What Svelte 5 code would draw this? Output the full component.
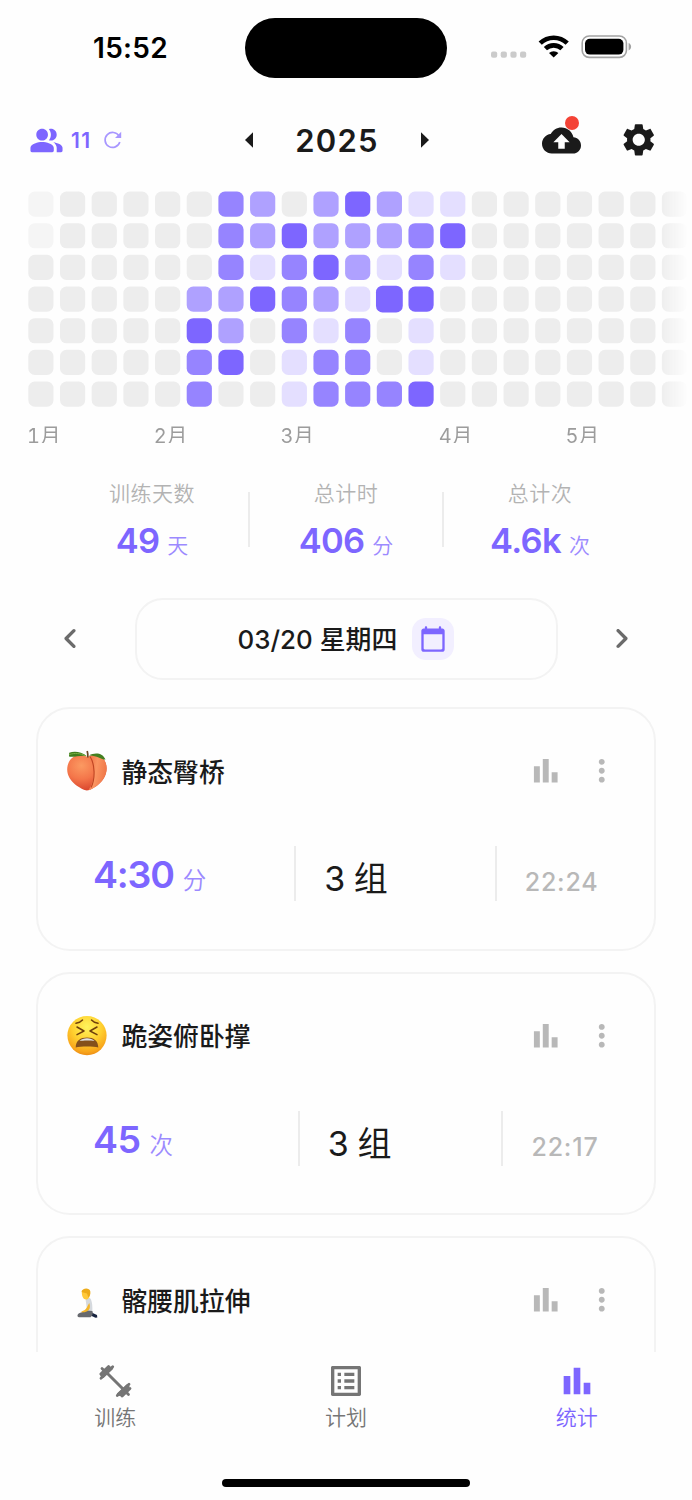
<script>
  // One string per week column, Monday to Sunday: 0 = empty, 1-4 = intensity, x = outside the year
  const weeks = [
    'xx00000', '0000000', '0000000', '0000000', '0000000', '0002433',
    '3332240', '2214000', '0433311', '2242133', '4221333', '2214003',
    '1334114', '1410000', '0000000', '0000000', '0000000', '0000000',
    '0000000', '0000000', '0000000'
  ];
  const selected = { week: 11, day: 3 };
  const months = [
    { name: '1月', column: 1 },
    { name: '2月', column: 5 },
    { name: '3月', column: 9 },
    { name: '4月', column: 14 },
    { name: '5月', column: 18 }
  ];
  const totals = [
    { label: '训练天数', value: '49', unit: '天' },
    { label: '总计时', value: '406', unit: '分' },
    { label: '总计次', value: '4.6k', unit: '次' }
  ];
  const records = [
    { icon: 'peach', name: '静态臀桥', value: '4:30', unit: '分', sets: '3 组', time: '22:24' },
    { icon: 'tired', name: '跪姿俯卧撑', value: '45', unit: '次', sets: '3 组', time: '22:17' },
    { icon: 'kneel', name: '髂腰肌拉伸' }
  ];
</script>

<div class="app">
  <div class="status">
    <span class="clock">15:52</span>
    <div class="island"></div>
    <svg class="signals" width="146" height="30" viewBox="488 32 146 30">
      <g fill="#cbcbcb">
        <rect x="491" y="51.5" width="6.2" height="6.2" rx="2" />
        <rect x="500.7" y="51.5" width="6.2" height="6.2" rx="2" />
        <rect x="510.4" y="51.5" width="6.2" height="6.2" rx="2" />
        <rect x="520" y="51.5" width="6.2" height="6.2" rx="2" />
      </g>
      <g fill="none" stroke="#000" stroke-width="4.6">
        <path d="M540.2 43.2a19.4 19.4 0 0 1 27 0" />
        <path d="M545.4 48.7a12 12 0 0 1 16.6 0" />
      </g>
      <path d="M553.7 57.6l-4.7-4.5a6.8 6.8 0 0 1 9.4 0z" />
      <rect x="582.2" y="36" width="44.2" height="21.4" rx="7" fill="none" stroke="#a3a3a3" stroke-width="1.6" />
      <rect x="585" y="38.8" width="38.4" height="15.8" rx="4.8" />
      <path d="M628.6 43v7.4c1.5-.6 2.5-2 2.5-3.7s-1-3.1-2.5-3.7z" fill="#a3a3a3" />
    </svg>
  </div>

  <header>
    <div class="online">
      <svg width="35" height="35" viewBox="0 0 24 24" fill="#7d66ff">
        <path d="M16.67 13.13C18.04 14.06 19 15.32 19 17v3h3c.55 0 1-.45 1-1v-2c0-2.18-3.57-3.47-6.33-3.87zM15 12c2.21 0 4-1.79 4-4s-1.79-4-4-4c-.47 0-.91.1-1.33.24C14.5 5.27 15 6.58 15 8s-.5 2.73-1.33 3.76c.42.14.86.24 1.33.24zM9 12c2.21 0 4-1.79 4-4s-1.79-4-4-4-4 1.79-4 4 1.79 4 4 4zM9 13c-2.67 0-8 1.34-8 4v2c0 .55.45 1 1 1h14c.55 0 1-.45 1-1v-2c0-2.66-5.33-4-8-4z" />
      </svg>
      <span>11</span>
      <svg width="20" height="20" viewBox="0 0 20 20">
        <path d="M16.1 6.2A7.5 7.5 0 1 0 16.8 12" fill="none" stroke="#a897ff" stroke-width="1.7" />
        <path d="M18.200 1.700v6.200h-6.200z" fill="#a897ff" />
      </svg>
    </div>
    <div class="year">
      <svg width="8" height="16" viewBox="0 0 8 16" fill="#1a1a1a"><path d="M8 .2v15.6L0 8z" /></svg>
      <strong>2025</strong>
      <svg width="8" height="16" viewBox="0 0 8 16" fill="#1a1a1a"><path d="M0 .2v15.6L8 8z" /></svg>
    </div>
    <div class="actions">
      <div class="cloud">
        <svg width="39" height="39" viewBox="0 0 24 24" fill="#1a1a1a"><path d="M19.35 10.04C18.67 6.59 15.64 4 12 4 9.11 4 6.6 5.64 5.35 8.04 2.34 8.36 0 10.91 0 14c0 3.31 2.69 6 6 6h13c2.76 0 5-2.24 5-5 0-2.64-2.05-4.78-4.65-4.96zM14 13v4h-4v-4H7l5-5 5 5h-3z" /></svg>
        <i class="dot"></i>
      </div>
      <svg width="37.5" height="37.5" viewBox="0 0 24 24" fill="#1a1a1a"><path d="M19.43 12.98c.04-.32.07-.64.07-.98s-.03-.66-.07-.98l2.11-1.65c.19-.15.24-.42.12-.64l-2-3.46c-.12-.22-.39-.3-.61-.22l-2.49 1c-.52-.4-1.08-.73-1.69-.98l-.38-2.65C14.46 2.18 14.25 2 14 2h-4c-.25 0-.46.18-.49.42l-.38 2.65c-.61.25-1.17.59-1.69.98l-2.49-1c-.23-.09-.49 0-.61.22l-2 3.46c-.13.22-.07.49.12.64l2.11 1.65c-.04.32-.07.65-.07.98s.03.66.07.98l-2.11 1.65c-.19.15-.24.42-.12.64l2 3.46c.12.22.39.3.61.22l2.49-1c.52.4 1.08.73 1.69.98l.38 2.65c.03.24.24.42.49.42h4c.25 0 .46-.18.49-.42l.38-2.65c.61-.25 1.17-.59 1.69-.98l2.49 1c.23.09.49 0 .61-.22l2-3.46c.12-.22.07-.49-.12-.64l-2.11-1.65zM12 15.9c-2.15 0-3.9-1.75-3.9-3.9s1.75-3.9 3.9-3.9 3.9 1.75 3.9 3.9-1.75 3.9-3.9 3.9z" /></svg>
    </div>
  </header>

  <section class="heatmap">
    <svg width="692" height="219" viewBox="0 188 692 219">
      {#each weeks as week, w}
        {#each week as level, d}
          {@const on = w === selected.week && d === selected.day}
          <rect
            class="l{level}"
            x={28.3 + w * 31.68 - (on ? 0.8 : 0)}
            y={191.5 + d * 31.66 - (on ? 0.8 : 0)}
            width={on ? 26.8 : 25.2}
            height={on ? 26.8 : 25.2}
            rx="6.6"
          />
        {/each}
      {/each}
    </svg>
    <div class="months">
      {#each months as m}
        <span style="grid-column-start: {m.column}">{m.name}</span>
      {/each}
    </div>
  </section>

  <section class="totals">
    {#each totals as t}
      <div class="total">
        <span class="label">{t.label}</span>
        <span class="value"><b>{t.value}</b><em>{t.unit}</em></span>
      </div>
    {/each}
  </section>

  <section class="picker">
    <svg width="41" height="41" viewBox="0 0 24 24" fill="#6b6b6b"><path d="M14.71 6.71c-.39-.39-1.02-.39-1.41 0L8.71 11.3c-.39.39-.39 1.02 0 1.41l4.59 4.59c.39.39 1.02.39 1.41 0 .39-.39.39-1.02 0-1.41L10.83 12l3.88-3.88c.39-.39.38-1.03 0-1.41z" /></svg>
    <div class="date">
      <span>03/20 星期四</span>
      <div class="calendar">
        <svg width="28" height="28" viewBox="0 0 24 24" fill="#7d66ff"><path d="M20 3h-1V2c0-.55-.45-1-1-1s-1 .45-1 1v1H7V2c0-.55-.45-1-1-1s-1 .45-1 1v1H4c-1.1 0-2 .9-2 2v16c0 1.1.9 2 2 2h16c1.1 0 2-.9 2-2V5c0-1.1-.9-2-2-2zm-1 18H5c-.55 0-1-.45-1-1V8h16v12c0 .55-.45 1-1 1z" /></svg>
      </div>
    </div>
    <svg width="41" height="41" viewBox="0 0 24 24" fill="#6b6b6b"><path d="M9.29 6.71c-.39.39-.39 1.02 0 1.41L13.17 12l-3.88 3.88c-.39.39-.39 1.02 0 1.41.39.39 1.02.39 1.41 0l4.59-4.59c.39-.39.39-1.02 0-1.41L10.7 6.7c-.38-.38-1.02-.38-1.41.01z" /></svg>
  </section>

  <section class="records">
    {#each records as r}
      <article>
        <div class="title">
          {#if r.icon === 'peach'}
            <svg width="42" height="42" viewBox="0 0 42 42">
              <defs>
                <radialGradient id="peach" cx=".36" cy=".3" r=".75">
                  <stop offset="0" stop-color="#fb9a62" />
                  <stop offset=".5" stop-color="#f4764a" />
                  <stop offset="1" stop-color="#d6402a" />
                </radialGradient>
                <linearGradient id="peach-side" x1="0" y1="0" x2="1" y2=".3">
                  <stop offset="0" stop-color="#ee6c40" />
                  <stop offset=".5" stop-color="#fb9562" />
                  <stop offset="1" stop-color="#f0794a" />
                </linearGradient>
              </defs>
              <path d="M21 40.6C16 39.800 1.200 32 1.200 19.500 1.200 10 8 5 14 5c3 0 5.500 1 7.500 2C24 5.500 26.500 5 29 5c7 0 11.600 6 11.600 13.500C40.600 32 26 39.800 21 40.600z" fill="url(#peach)" />
              <path d="M24 6.500C26 5.400 27 5 29 5c7 0 11.600 6 11.600 13.500C40.600 31 28 38.600 22.500 40.300 30 29 29.500 13 24 6.500z" fill="url(#peach-side)" />
              <path d="M24 6.500c5 7.500 5.500 22.500 1 31" fill="none" stroke="#bf4523" stroke-width="1.100" />
              <path d="M20.500 5.800C15 1.500 8 1 3.200 2.800L3 6.500c5 .8 11-1.500 17.500-.7z" fill="#3f7d1d" />
              <path d="M3.200 4.600C9 2.600 14 3.300 20 5.800" fill="none" stroke="#79ad43" stroke-width="1" />
              <path d="M23 5.500C29 2 37 3 39.500 9.600 35 9.500 30 5 23 5.500z" fill="#437f20" />
              <path d="M21.800 7.500C22 5 21.800 3 21.200 1" fill="none" stroke="#6d4424" stroke-width="1.700" />
            </svg>
          {:else if r.icon === 'tired'}
            <svg width="42" height="42" viewBox="0 0 42 42">
              <defs>
                <radialGradient id="face" cx=".5" cy=".28" r=".75">
                  <stop offset="0" stop-color="#fff45d" />
                  <stop offset=".5" stop-color="#ffd02f" />
                  <stop offset=".85" stop-color="#f8a51b" />
                  <stop offset="1" stop-color="#e88615" />
                </radialGradient>
              </defs>
              <circle cx="21" cy="20.600" r="19.600" fill="url(#face)" />
              <g fill="none" stroke="#70400c" stroke-width="1.500" stroke-linecap="round" stroke-linejoin="round">
                <path d="M11 12l7 4-7 3.700M31 12l-7 4 7 3.700M10 8.300c2.500-.3 5-1.500 6.500-3.200M32 8.300c-2.500-.3-5-1.500-6.500-3.200" />
              </g>
              <path d="M9.700 32.500C9.700 25.500 14.500 22.400 21 22.400s11.300 3.100 11.300 10.100c-5-1.200-17.600-1.200-22.600 0z" fill="#85501b" />
              <path d="M13.500 26C17 22.300 25 22.300 28.500 26 25 25.200 17 25.200 13.500 26z" fill="#dfe1e3" />
            </svg>
          {:else}
            <svg width="42" height="42" viewBox="0 0 42 42">
              <path d="M24.500 33l6.500 3 .3 2.400-1.800.3-6-2.700z" fill="#17233f" />
              <path d="M19.500 20c.5-2 4.500-2.500 5.500.5 1.200 3 1.600 7 1.300 12.500h-5z" fill="#d5d9de" />
              <path d="M21 31.500l5.300.5c1 2 .5 4.500-1.800 6.300H13c-2.200-.3-2-3.300.6-4.300z" fill="#67696e" />
              <path d="M23.200 24c1.300 3.500 1 6.500-2 8.200-1.500.8-3.500 1.200-5.400 1.200l-.4-1c2.500-.8 4.600-2.200 5.400-4z" fill="#f4b62c" />
              <path d="M15.800 13.500c0-3.800 7.400-4.500 8.200-.5.400 3.500-.8 7-3.200 7.500-3.500.5-5-3.500-5-7z" fill="#ffc93b" />
              <path d="M15.500 13c.3-4 7.800-4.800 8.800-.8.400 2.800-.4 4.800-2 6.300l-1.300-4z" fill="#edab1a" />
            </svg>
          {/if}
          <h2>{r.name}</h2>
          <svg class="chart" width="35.500" height="35.500" viewBox="0 0 24 24" fill="#b8b8b8"><path d="M4 9h4v11H4zm12 4h4v7h-4zm-6-9h4v16h-4z" /></svg>
          <svg width="35.500" height="35.500" viewBox="0 0 24 24" fill="#b8b8b8"><path d="M12 8c1.100 0 2-.9 2-2s-.9-2-2-2-2 .9-2 2 .9 2 2 2zm0 2c-1.100 0-2 .9-2 2s.9 2 2 2 2-.9 2-2-.9-2-2-2zm0 6c-1.100 0-2 .9-2 2s.9 2 2 2 2-.9 2-2-.9-2-2-2z" /></svg>
        </div>
        {#if r.value}
          <div class="detail">
            <div class="amount"><b class:clocked={r.value.includes(':')}>{r.value}</b><em>{r.unit}</em></div>
            <i></i>
            <div class="sets">{r.sets}</div>
            <i></i>
            <div class="time">{r.time}</div>
          </div>
        {/if}
      </article>
    {/each}
  </section>

  <footer>
    <nav>
      <div class="tab">
        <svg width="40" height="40" viewBox="95.500 1361 40 40" stroke="#757575" stroke-linecap="round" fill="#757575" stroke-linejoin="round">
          <path d="M106 1371.500l19 19" stroke-width="3" />
          <path d="M101.500 1378.200l11.700-11.400M101.300 1374l7.800-7.500M102.500 1368.500l4 4M129.500 1384.200l-11.700 11.400M130.500 1388.500l-7.800 7.500M129 1394.500l-4-4" stroke-width="2.800" />
          <path d="M102 1375.500l7-8.500 3.500 1.300-9 8.700zM129 1387l-7 8.500-3.500-1.300 9-8.700z" stroke-width="2.400" />
        </svg>
        <span>训练</span>
      </div>
      <div class="tab">
        <svg width="40" height="40" viewBox="0 0 24 24" fill="#757575"><path d="M11 7h6v2h-6zm0 4h6v2h-6zm0 4h6v2h-6zM7 7h2v2H7zm0 4h2v2H7zm0 4h2v2H7zM20.100 3H3.900c-.5 0-.9.4-.9.9v16.200c0 .4.4.9.9.9h16.200c.4 0 .9-.5.9-.9V3.900c0-.5-.5-.9-.9-.9zM19 19H5V5h14v14z" /></svg>
        <span>计划</span>
      </div>
      <div class="tab active">
        <svg width="40" height="40" viewBox="0 0 24 24" fill="#7d66ff"><path d="M4 9h4v11H4zm12 4h4v7h-4zm-6-9h4v16h-4z" /></svg>
        <span>统计</span>
      </div>
    </nav>
    <div class="home"></div>
  </footer>
</div>

<style>
  :global(body) { margin: 0; background: #fff; }
  .app {
    width: 692px;
    height: 1500px;
    overflow: hidden;
    display: flex;
    flex-direction: column;
    background: #fefefe;
    color: #1a1a1a;
    font-family: Inter, "Noto Sans CJK SC", sans-serif;
  }
  .app * { box-sizing: border-box; flex-shrink: 0; }
  svg { display: block; }
  em, i { font-style: normal; }

  .status { height: 92px; display: flex; align-items: flex-start; }
  .clock { width: 152px; margin-left: 93px; padding-top: 31px; font-size: 28px; line-height: 34px; font-weight: 600; letter-spacing: .3px; color: #000; }
  .island { width: 202px; height: 59.500px; margin-top: 18px; border-radius: 30px; background: #000; }
  .signals { margin: 32px 0 0 41px; }

  header { height: 96px; display: grid; grid-template-columns: 244.500px 184px 1fr; align-items: center; }
  .online { display: flex; align-items: center; padding-left: 28.500px; }
  .online span { width: 22px; margin: 0 9.500px 0 7.500px; padding-top: 2px; font-size: 21px; line-height: 26px; font-weight: 600; letter-spacing: 1.300px; color: #7d66ff; }
  .year { display: flex; align-items: center; justify-content: space-between; }
  .year strong { padding-top: 2px; font-size: 31px; line-height: 40px; font-weight: 600; letter-spacing: 1.200px; margin-right: -1px; }
  .actions { display: flex; align-items: center; justify-content: space-between; padding: 0 34.500px 0 113.500px; }
  .cloud { position: relative; }
  .dot { position: absolute; right: 2px; top: -4.500px; width: 14px; height: 14px; border-radius: 50%; background: #f44336; }

  .heatmap { height: 254.500px; overflow: hidden; -webkit-mask-image: linear-gradient(90deg, #000 660px, transparent 688px); mask-image: linear-gradient(90deg, #000 660px, transparent 688px); }
  rect.lx { fill: #f5f5f5; }
  rect.l0 { fill: #ededed; }
  rect.l1 { fill: #e4dfff; }
  rect.l2 { fill: #afa1ff; }
  rect.l3 { fill: #9684ff; }
  rect.l4 { fill: #7d66ff; }
  .months { display: grid; grid-template-columns: repeat(21, 31.680px); padding: 14px 0 0 27px; }
  .months span { white-space: nowrap; width: 0; font-size: 20px; line-height: 31px; letter-spacing: .5px; font-weight: 400; font-feature-settings: "tnum"; color: #9c9c9c; }

  .totals { height: 155px; display: grid; grid-template-columns: repeat(3, 194px); justify-content: center; padding: 49.500px 2px 0 0; align-items: start; }
  .total { height: 55px; display: flex; flex-direction: column; align-items: center; }
  .total:first-child { padding-left: 2px; }
  .total + .total { border-left: 2px solid #ececec; }
  .label { font-size: 21px; line-height: 30px; margin-top: -13px; letter-spacing: .5px; font-weight: 350; color: #b3b3b3; }
  .value { display: flex; align-items: baseline; margin-top: 10px; line-height: 44px; }
  .value b { font-size: 34.500px; font-weight: 600; letter-spacing: -.7px; color: #7d66ff; }
  .value em { font-size: 21px; font-weight: 350; color: #9c8aff; margin-left: 8px; }

  .picker { height: 82px; display: flex; align-items: center; justify-content: space-between; padding: 0 50px; }
  .date { width: 423px; height: 82px; border: 2px solid #f3f3f3; border-radius: 28px; display: flex; align-items: center; justify-content: center; gap: 15px; }
  .date span { padding-top: 2px; font-size: 25.900px; line-height: 36px; font-weight: 500; }
  .calendar { width: 42px; height: 42px; border-radius: 14px; background: #f2efff; display: flex; align-items: center; justify-content: center; }

  .records { height: 672.500px; overflow: hidden; padding: 27.500px 36px 0 35.500px; display: flex; flex-direction: column; gap: 21px; }
  article { height: 243.500px; border: 2px solid #f3f3f3; border-radius: 34px; padding: 39px 35px 0 28.500px; }
  .title { display: flex; align-items: center; height: 46px; }
  h2 { margin: 0 0 0 13.500px; padding-top: 3px; font-size: 25.800px; line-height: 38px; font-weight: 500; }
  .chart { margin-left: auto; margin-right: 20.500px; }
  .detail { height: 55px; margin: 52px 20.500px 0 27px; display: flex; }
  .detail i { width: 2px; background: #ececec; margin-right: 28px; }
  .amount { flex: 5.9 0 0; display: flex; align-items: baseline; line-height: 58px; white-space: nowrap; }
  .amount b { font-size: 37.500px; font-weight: 600; letter-spacing: -.5px; color: #7d66ff; }
  .amount b.clocked { letter-spacing: -1.200px; }
  .amount em { position: relative; top: 1px; font-size: 23.500px; font-weight: 350; color: #9c8aff; margin-left: 9px; }
  .sets { flex: 5 0 0; font-size: 34px; line-height: 66px; letter-spacing: -.5px; white-space: nowrap; }
  .time { font-size: 25px; line-height: 72px; font-weight: 500; letter-spacing: .8px; color: #b8b8b8; }

  footer { height: 148px; background: #fefefe; display: flex; flex-direction: column; align-items: center; }
  nav { width: 692px; height: 127px; display: grid; grid-template-columns: repeat(3, 1fr); padding-top: 9px; }
  .tab { display: flex; flex-direction: column; align-items: center; gap: 2px; font-size: 21px; line-height: 30px; font-weight: 350; color: #757575; }
  .active { color: #7d66ff; }
  .home { width: 248px; height: 8px; border-radius: 4px; background: #000; }
</style>
